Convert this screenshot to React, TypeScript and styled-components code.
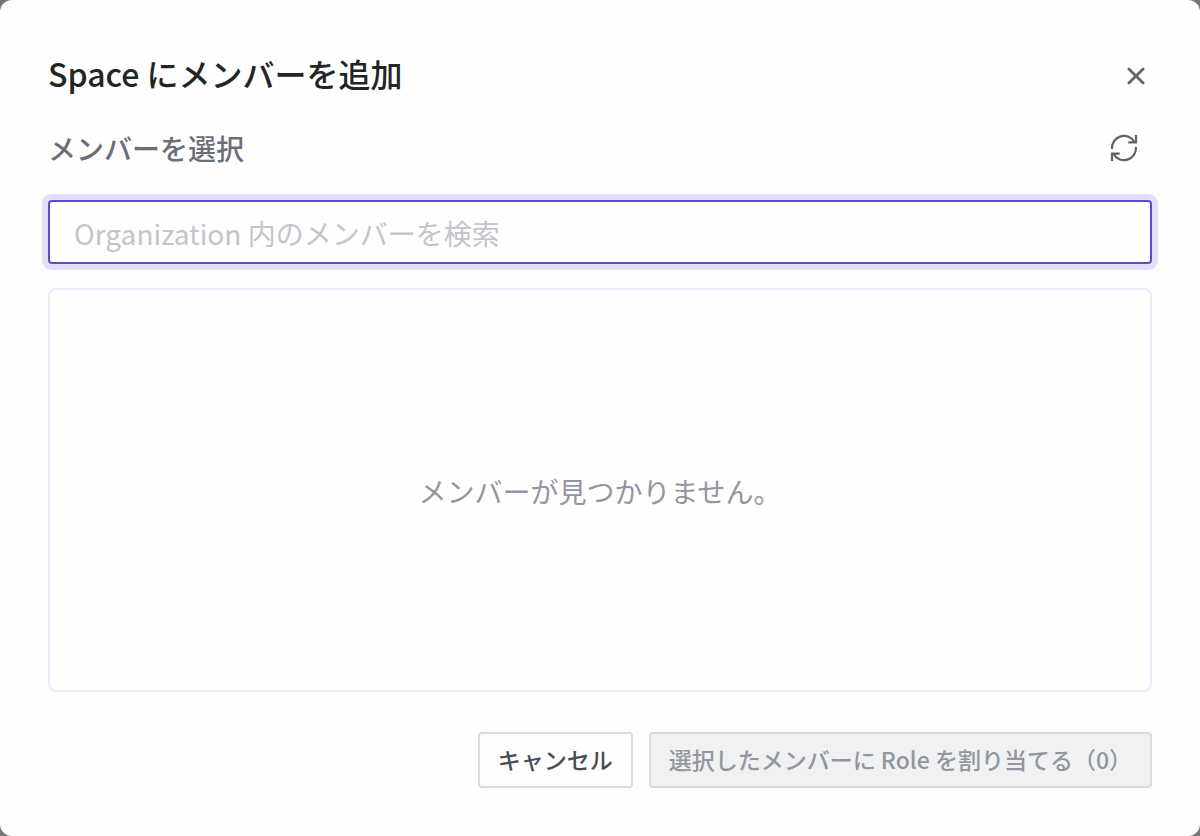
import React, { useState } from "react";
import styled, { createGlobalStyle } from "styled-components";

const GlobalStyle = createGlobalStyle`
  *, *::before, *::after { box-sizing: border-box; }
  html, body, #root { height: 100%; }
  body {
    margin: 0;
    background: #767676;
    font-family: "Noto Sans CJK JP", sans-serif;
  }
  button, input { font-family: inherit; }
`;

const Dialog = styled.div`
  display: flex;
  flex-direction: column;
  min-height: 100%;
  padding: 48px;
  background: #fefefe;
  border-radius: 12px;
`;

const Row = styled.div<{ $padRight?: number }>`
  display: flex;
  align-items: center;
  justify-content: space-between;
  height: 56px;
  padding-right: ${(p) => p.$padRight ?? 0}px;
`;

const Title = styled.h1`
  margin: 0;
  padding-bottom: 6px;
  font-size: 32px;
  font-weight: 500;
  line-height: 48px;
  color: #222426;
`;

const Label = styled.label`
  font-size: 28px;
  font-weight: 500;
  line-height: 40px;
  color: #6a6e7a;
`;

const IconButton = styled.button`
  display: flex;
  padding: 0;
  border: 0;
  background: none;
  color: #5f636c;
  cursor: pointer;
`;

const Field = styled.div`
  display: flex;
  flex-direction: column;
  gap: 24px;
  margin-top: 16px;
`;

const SearchInput = styled.input`
  width: 100%;
  height: 64px;
  padding: 2px 24px 0;
  border: 2px solid #5f4bc9;
  border-radius: 4px;
  outline: none;
  background: #fefefe;
  box-shadow: 0 0 0 6px #e2ddf8;
  font-size: 28px;
  color: #222426;

  &::placeholder {
    color: #c2c5c9;
    opacity: 1;
  }
`;

const ResultPanel = styled.div`
  display: flex;
  flex: 1;
  align-items: center;
  justify-content: center;
  min-height: 200px;
  margin-top: 24px;
  padding-top: 2px;
  border: 2px solid #edebfc;
  border-radius: 8px;
`;

const EmptyMessage = styled.p`
  margin: 0;
  font-size: 28px;
  line-height: 40px;
  color: #93969e;
`;

const Footer = styled.div`
  display: flex;
  justify-content: flex-end;
  gap: 16px;
  margin-top: 40px;
`;

const Button = styled.button`
  height: 56px;
  padding: 0 18px 2px;
  border: 2px solid #d9dbdd;
  border-radius: 4px;
  background: #fefefe;
  font-size: 23px;
  font-weight: 500;
  color: #484c53;
  white-space: nowrap;
  cursor: pointer;

  &:disabled {
    background: #eff1f2;
    color: #93969e;
    cursor: default;
  }
`;

const CloseIcon = () => (
  <svg width="32" height="32" viewBox="0 0 32 32" fill="none" stroke="currentColor" strokeWidth="2.8" strokeLinecap="round" aria-hidden="true">
    <path d="M8.9 8.9 23.1 23.1M23.1 8.9 8.9 23.1" />
  </svg>
);

const RefreshIcon = () => (
  <svg width="32" height="32" viewBox="0 0 32 32" fill="none" stroke="currentColor" strokeWidth="2.2" aria-hidden="true">
    <path d="M4.04 17A12 12 0 0 1 26.6 10.3M27.96 15A12 12 0 0 1 5.4 21.7" />
    <path d="M28 3V10.4H20.3M4 29V21.6H11.7" />
  </svg>
);

export default function App() {
  const [query, setQuery] = useState("");
  return (
    <>
      <GlobalStyle />
      <Dialog role="dialog" aria-labelledby="dialog-title">
        <Row>
          <Title id="dialog-title">Space にメンバーを追加</Title>
          <IconButton type="button" aria-label="閉じる">
            <CloseIcon />
          </IconButton>
        </Row>
        <Field>
          <Row $padRight={12}>
            <Label htmlFor="member-search">メンバーを選択</Label>
            <IconButton type="button" aria-label="更新">
              <RefreshIcon />
            </IconButton>
          </Row>
          <SearchInput
            id="member-search"
            type="text"
            placeholder="Organization 内のメンバーを検索"
            value={query}
            onChange={(e) => setQuery(e.target.value)}
          />
        </Field>
        <ResultPanel>
          <EmptyMessage>メンバーが見つかりません。</EmptyMessage>
        </ResultPanel>
        <Footer>
          <Button type="button">キャンセル</Button>
          <Button type="button" disabled>
            選択したメンバーに Role を割り当てる（0）
          </Button>
        </Footer>
      </Dialog>
    </>
  );
}
